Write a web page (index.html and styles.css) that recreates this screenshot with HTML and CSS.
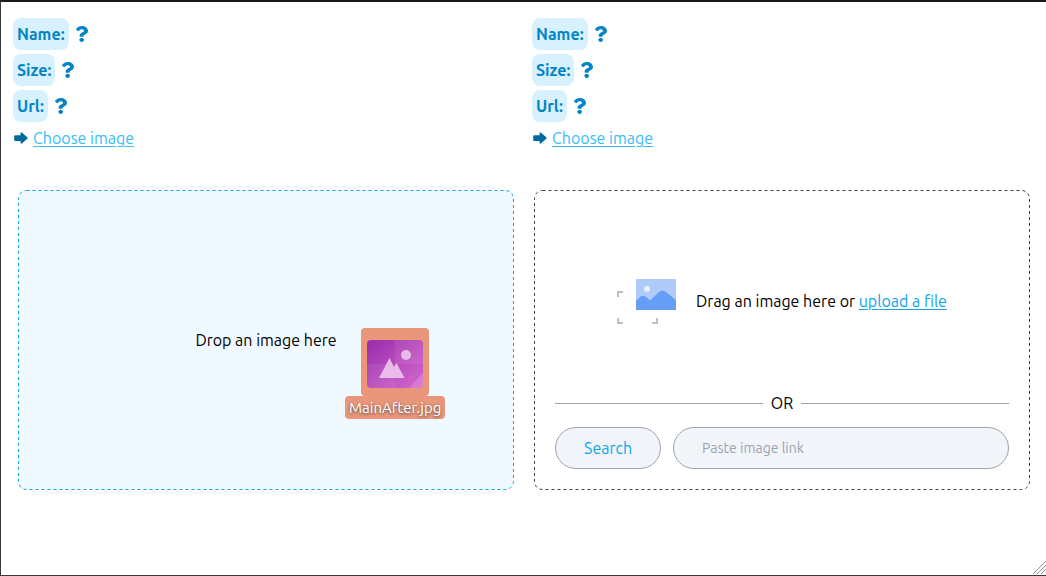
FILE: index.html
```html
<!DOCTYPE html>
<html lang="en">
<head>
<meta charset="utf-8">
<title>Image comparison</title>
<link rel="stylesheet" href="styles.css">
</head>
<body>
<svg class="defs" aria-hidden="true">
  <symbol id="question" viewBox="25 0 353 512" preserveAspectRatio="none"><path d="M202.021 0C122.202 0 70.503 32.703 29.914 91.026c-7.363 10.58-5.093 25.086 5.178 32.874l43.138 32.709c10.373 7.865 25.132 6.026 33.253-4.148 25.049-31.381 43.63-49.449 82.757-49.449 30.764 0 68.816 19.799 68.816 49.631 0 22.552-18.617 34.134-48.993 51.164-35.423 19.86-82.299 44.576-82.299 106.405V320c0 13.255 10.745 24 24 24h72.471c13.255 0 24-10.745 24-24v-5.773c0-42.86 125.268-44.645 125.268-160.627C377.504 66.256 286.902 0 202.021 0zM192 373.459c-38.196 0-69.271 31.075-69.271 69.271 0 38.195 31.075 69.27 69.271 69.27s69.271-31.075 69.271-69.271-31.075-69.27-69.271-69.27z"/></symbol>
  <symbol id="arrow" viewBox="0 0 14 12"><path d="M1.200 3.200H6.600V1.300Q6.700 0 7.800 .5L13.300 5.300Q14 6 13.300 6.700L7.800 11.500Q6.700 12 6.600 10.700V8.900H1.200Q.2 8.900 .2 7.900V4.200Q.2 3.200 1.200 3.200Z"/></symbol>
</svg>
<main class="frame">
  <section class="infos">
    <div class="info">
      <dl class="facts">
        <div class="fact"><dt class="tag">Name:</dt><dd class="value"><svg class="question" role="img" aria-label="Unknown"><use href="#question"/></svg></dd></div>
        <div class="fact"><dt class="tag">Size:</dt><dd class="value"><svg class="question" role="img" aria-label="Unknown"><use href="#question"/></svg></dd></div>
        <div class="fact"><dt class="tag">Url:</dt><dd class="value"><svg class="question" role="img" aria-label="Unknown"><use href="#question"/></svg></dd></div>
      </dl>
      <div class="choose"><svg class="arrow" aria-hidden="true"><use href="#arrow"/></svg><a class="choose-link" href="#first">Choose image</a></div>
    </div>
    <div class="info">
      <dl class="facts">
        <div class="fact"><dt class="tag">Name:</dt><dd class="value"><svg class="question" role="img" aria-label="Unknown"><use href="#question"/></svg></dd></div>
        <div class="fact"><dt class="tag">Size:</dt><dd class="value"><svg class="question" role="img" aria-label="Unknown"><use href="#question"/></svg></dd></div>
        <div class="fact"><dt class="tag">Url:</dt><dd class="value"><svg class="question" role="img" aria-label="Unknown"><use href="#question"/></svg></dd></div>
      </dl>
      <div class="choose"><svg class="arrow" aria-hidden="true"><use href="#arrow"/></svg><a class="choose-link" href="#second">Choose image</a></div>
    </div>
  </section>
  <section class="zones">
    <div class="zone zone-active" id="first">
      <svg class="outline" aria-hidden="true"><rect class="outline-rect" x=".5" y=".5" rx="8"/></svg>
      <p class="prompt">Drop an image here</p>
      <div class="file">
        <div class="file-thumb">
          <svg class="file-icon" viewBox="0 0 56 48" aria-hidden="true">
            <defs><linearGradient id="purple" x1="0" y1="0" x2="1" y2="1"><stop offset="0" stop-color="#982cab"/><stop offset="1" stop-color="#d66ace"/></linearGradient></defs>
            <rect width="56" height="48" rx="4" fill="url(#purple)"/>
            <path d="M28 0H52Q56 0 56 4V24H28Z" fill="#fff" opacity=".07"/>
            <path d="M0 24H28V48H4Q0 48 0 44Z" fill="#fff" opacity=".06"/>
            <path d="M56 33V44Q56 48 52 48H42Z" fill="#fff" opacity=".15"/>
            <circle cx="39" cy="15" r="5" fill="#e8bbe8"/>
            <path d="M12 38L22.500 18L27 27L29.500 23L37.500 38Z" fill="#e8bbe8"/>
          </svg>
        </div>
        <span class="file-name">MainAfter.jpg</span>
      </div>
    </div>
    <div class="zone" id="second">
      <svg class="outline" aria-hidden="true"><rect class="outline-rect" x=".5" y=".5" rx="8"/></svg>
      <div class="drag">
        <svg class="picture" viewBox="0 0 59 45" aria-hidden="true">
          <path d="M1 18V13H6M1 39V44H6M35 44H40V39" fill="none" stroke="#bdc1c6" stroke-width="2"/>
          <path d="M19 0H59V31H19Z" fill="#aecbfa"/>
          <circle cx="30" cy="10" r="3" fill="#e8f0fe"/>
          <path d="M19 31V22L23 18Q26 15.500 29 18L33 21.500L42 13Q45.500 10 49 13L59 21V31Z" fill="#669df6"/>
        </svg>
        <p class="prompt">Drag an image here or <a class="upload" href="#second">upload a file</a></p>
      </div>
      <div class="divider">OR</div>
      <form class="search">
        <button class="search-button" type="button">Search</button>
        <input class="search-input" type="text" placeholder="Paste image link" aria-label="Image link">
      </form>
    </div>
  </section>
  <svg class="grip" viewBox="0 0 13 13" aria-hidden="true"><path d="M0 13L13 0M4 13L13 4M8 13L13 8" stroke="#8f8f94" fill="none"/></svg>
</main>
</body>
</html>
```
FILE: styles.css
```css
* { box-sizing: border-box; }
body {
  margin: 0;
  background: #fff;
  color: #000;
  font: 16px/24px Ubuntu, "Noto Sans", sans-serif;
}
.defs { position: absolute; width: 0; height: 0; }
.frame {
  position: relative;
  min-height: 100vh;
  padding-top: 16px;
  border: solid #3a383f;
  border-width: 2px 0 1px 1px;
  border-top-color: #1b191d;
}
.infos {
  display: grid;
  grid-template-columns: 1fr 1fr;
  gap: 16px;
  padding: 0 11px 0 12px;
}
.facts {
  display: grid;
  gap: 4px;
  margin: 0;
}
.fact { display: flex; align-items: center; gap: 7px; }
.tag {
  padding: 4px;
  border-radius: 8px;
  background: #d8f1ff;
  color: #0284c7;
  font-weight: 700;
}
.value { display: flex; margin: 0; }
.question { width: 12px; height: 16px; fill: #0284c7; }
.choose {
  display: flex;
  align-items: center;
  gap: 5px;
  margin-top: 4px;
  padding-left: 1px;
}
.arrow { width: 14px; height: 12px; fill: #0369a1; }
.choose-link { color: #38bdf8; text-underline-offset: 2px; }
.zones {
  display: grid;
  grid-template-columns: 1fr 1fr;
  gap: 20px;
  margin-top: 40px;
  padding: 0 16px 0 17px;
}
.zone {
  position: relative;
  display: flex;
  flex-direction: column;
  min-height: 300px;
  padding: 21px;
  border-radius: 8px;
  color: #000;
}
.zone-active {
  align-items: center;
  justify-content: center;
  background: #f0f9ff;
}
.outline {
  position: absolute;
  inset: 0;
  width: 100%;
  height: 100%;
  pointer-events: none;
}
.outline-rect {
  width: calc(100% - 1px);
  height: calc(100% - 1px);
  fill: none;
  stroke: #334155;
  stroke-dasharray: 3 3;
}
.zone-active .outline-rect { stroke: #0ea5e9; }
.prompt { margin: 0; }
.file {
  position: absolute;
  top: 138px;
  left: 327px;
  display: flex;
  flex-direction: column;
  align-items: center;
}
.file-thumb {
  padding: 12px 6px 8px;
  border-radius: 4px;
  background: #e9967a;
}
.file-icon { display: block; width: 56px; height: 48px; }
.file-name {
  padding: 0 4px;
  border-radius: 4px;
  background: #e9967a;
  color: #fff;
  font-size: 15px;
  line-height: 23px;
  text-shadow: 0 1px 3px #444;
}
.drag {
  flex: 1;
  display: flex;
  align-items: center;
  justify-content: center;
  gap: 20px;
}
.picture { width: 59px; height: 45px; }
.upload { color: #0ea5e9; text-underline-offset: 2px; }
.divider { display: flex; align-items: center; gap: 8px; }
.divider::before, .divider::after {
  content: "";
  flex: 1;
  height: 1px;
  background: #9ca3af;
}
.search { display: flex; gap: 12px; margin-top: 12px; }
.search-button, .search-input {
  height: 42px;
  padding: 0 28px;
  border: 1px solid #9ca3af;
  border-radius: 21px;
  background: #f1f5f9;
  font: inherit;
}
.search-button { color: #0ea5e9; }
.search-input { flex: 1; min-width: 0; font-size: 14px; }
.search-input::placeholder { color: #9ca3af; opacity: 1; }
.grip {
  position: absolute;
  right: 0;
  bottom: 1px;
  width: 13px;
  height: 13px;
}
```
